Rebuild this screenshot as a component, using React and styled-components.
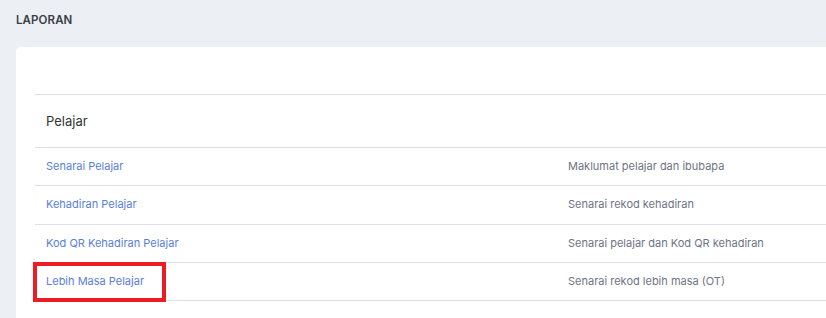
import React from 'react';
import styled, { createGlobalStyle } from 'styled-components';

const GlobalStyle = createGlobalStyle`
  html, body {
    margin: 0;
    padding: 0;
    background: #ecf0f5;
    overflow: hidden;
  }
  body {
    font-family: Inter, "Open Sans", sans-serif;
  }
`;

const Page = styled.div`
  width: 1100px;
  padding: 12px 0 0 16px;
`;

const PageTitle = styled.h4`
  margin: 0 0 19px;
  font-size: 11.5px;
  line-height: 16px;
  font-weight: 600;
  color: #3a3d45;
  letter-spacing: 0.1px;
`;

const Card = styled.div`
  background: #fff;
  border-radius: 5px 0 0 0;
  padding: 47px 19px 24px;
`;

const Table = styled.table`
  width: 100%;
  border-collapse: collapse;
  table-layout: fixed;
`;

const Col = styled.col`
  width: ${p => p.$width || 'auto'};
`;

const HeadCell = styled.th`
  text-align: left;
  font-weight: 400;
  font-size: 13px;
  color: #333;
  padding: 18px 11px 18px;
  line-height: 16px;
  border-top: 1px solid #e0e1e6;
  border-bottom: 1px solid #e0e1e6;
`;

const Cell = styled.td`
  position: relative;
  font-size: 11px;
  line-height: 13.3px;
  padding: 12px 11px;
  border-bottom: 1px solid #e0e1e6;
  color: #6e7483;
`;

const ReportLink = styled.a`
  color: #5a80d8;
  text-decoration: none;
`;

const Highlight = styled.span`
  position: absolute;
  left: -2px;
  top: -1px;
  width: 125px;
  height: 32px;
  border: 4px solid #ed1c24;
  pointer-events: none;
`;

const reports = [
  { name: 'Senarai Pelajar', desc: 'Maklumat pelajar dan ibubapa' },
  { name: 'Kehadiran Pelajar', desc: 'Senarai rekod kehadiran' },
  { name: 'Kod QR Kehadiran Pelajar', desc: 'Senarai pelajar dan Kod QR kehadiran' },
  { name: 'Lebih Masa Pelajar', desc: 'Senarai rekod lebih masa (OT)', marked: true },
];

export default function App() {
  return (
    <Page>
      <GlobalStyle />
      <PageTitle>LAPORAN</PageTitle>
      <Card>
        <Table>
          <colgroup>
            <Col $width="522px" />
            <Col />
          </colgroup>
          <thead>
            <tr>
              <HeadCell colSpan={2}>Pelajar</HeadCell>
            </tr>
          </thead>
          <tbody>
            {reports.map(r => (
              <tr key={r.name}>
                <Cell>
                  {r.marked && <Highlight />}
                  <ReportLink href="#">{r.name}</ReportLink>
                </Cell>
                <Cell>{r.desc}</Cell>
              </tr>
            ))}
          </tbody>
        </Table>
      </Card>
    </Page>
  );
}
